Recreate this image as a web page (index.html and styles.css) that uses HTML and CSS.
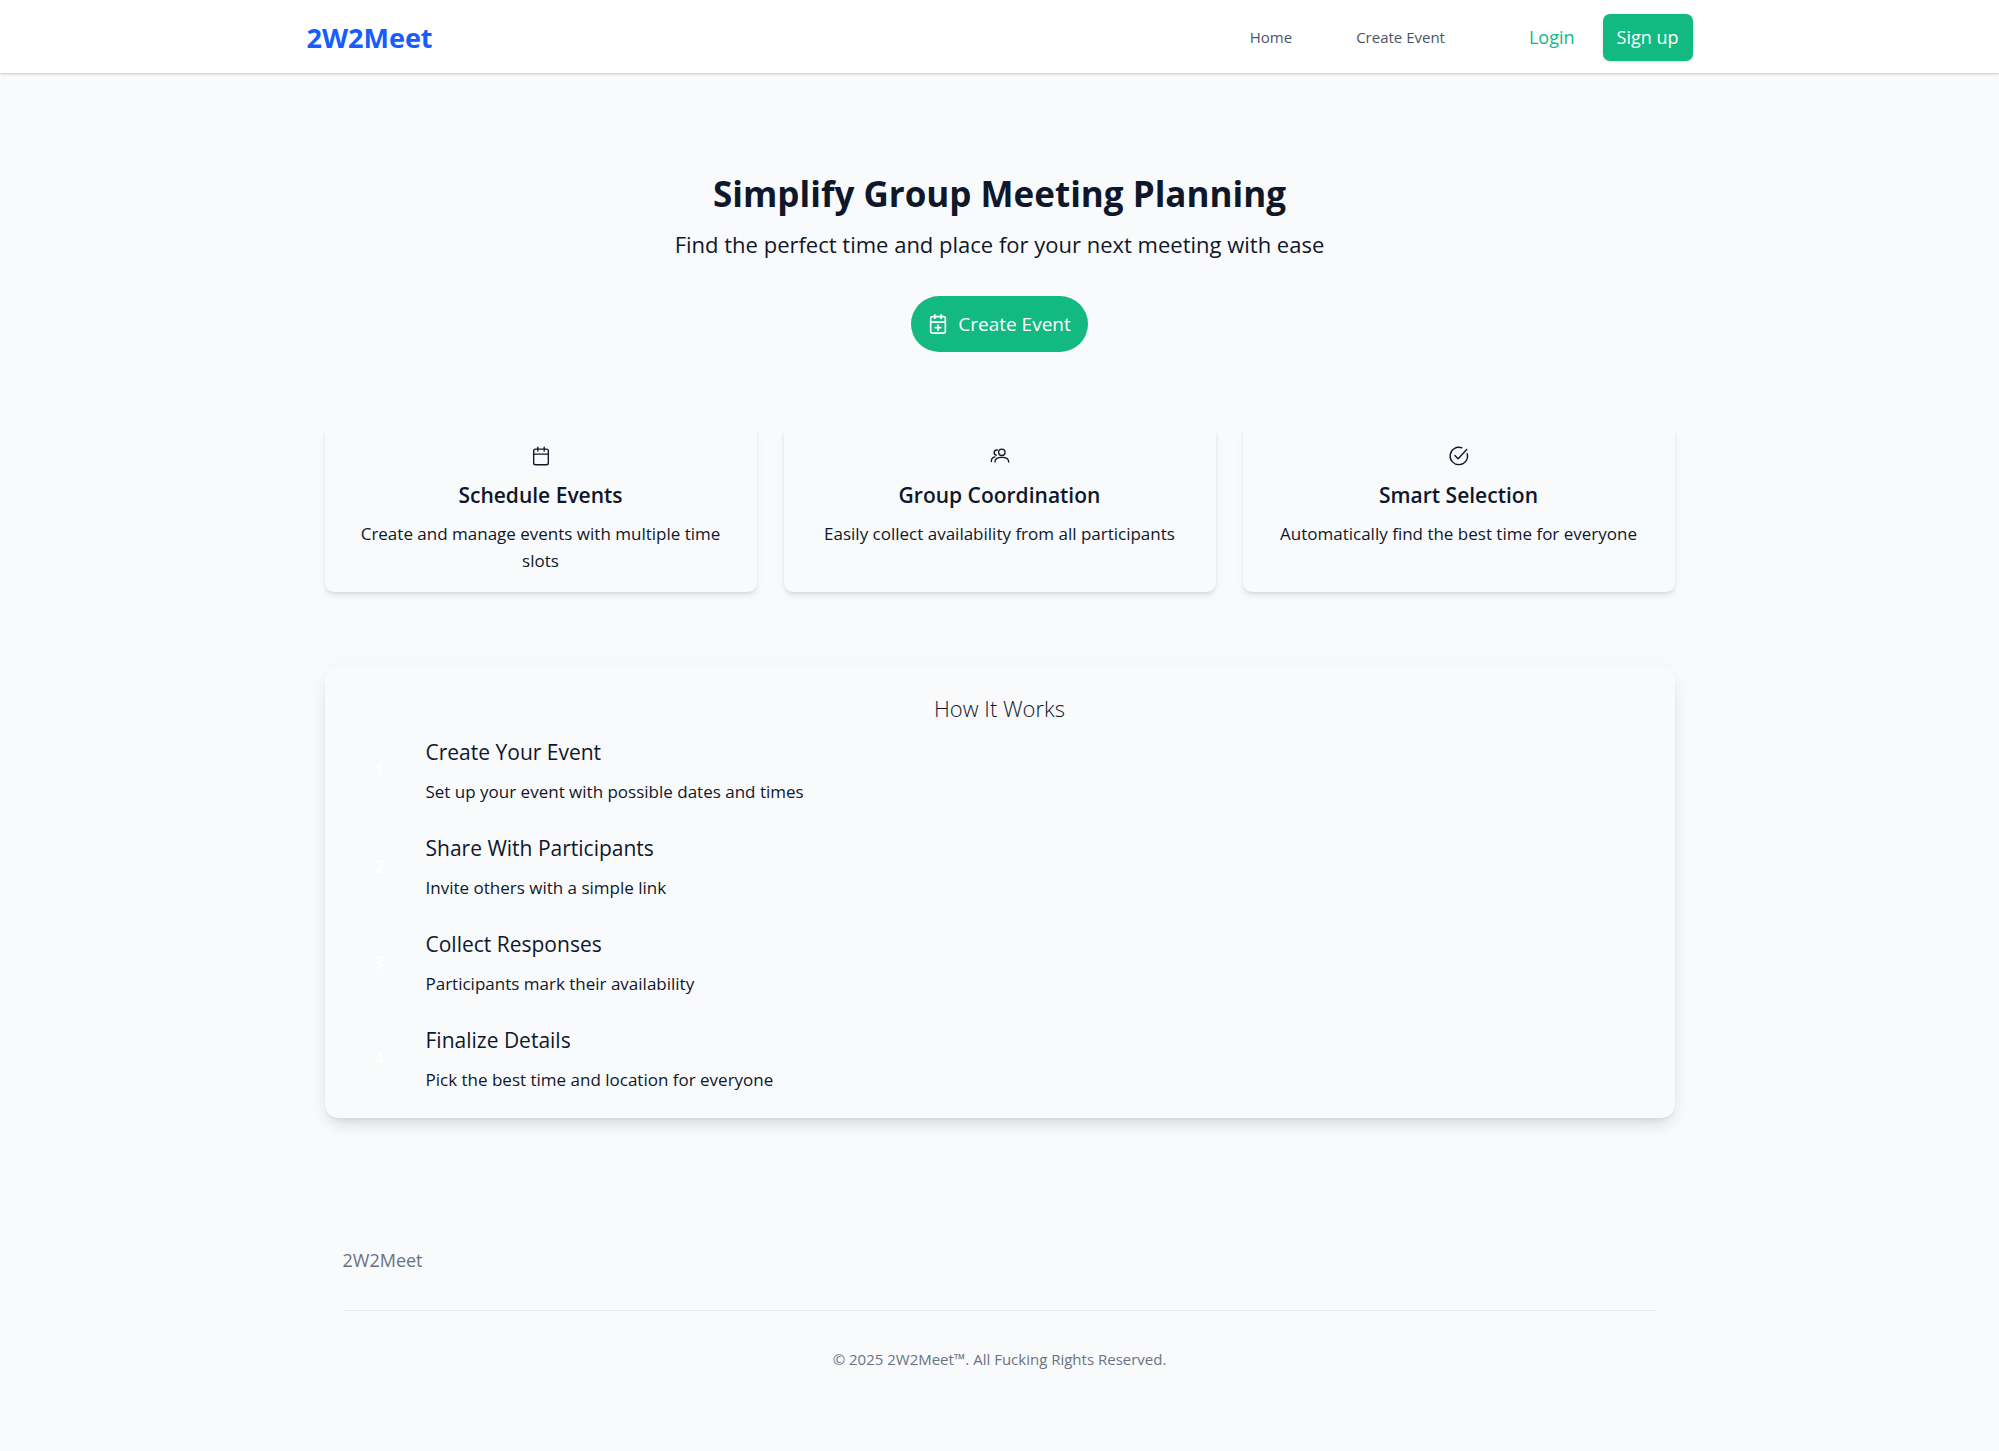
FILE: index.html
```html
<!DOCTYPE html>
<html lang="en">
<head>
<meta charset="utf-8">
<meta name="viewport" content="width=device-width, initial-scale=1">
<title>2W2Meet</title>
<link rel="stylesheet" href="styles.css">
</head>
<body>
<header class="site-header">
  <div class="header-inner">
    <a class="logo" href="#">2W2Meet</a>
    <nav class="nav">
      <a class="nav-link" href="#">Home</a>
      <a class="nav-link" href="#">Create Event</a>
      <div class="auth">
        <a class="login" href="#">Login</a>
        <button class="signup" type="button">Sign up</button>
      </div>
    </nav>
  </div>
</header>
<main class="main">
  <section class="hero">
    <h1 class="hero-title">Simplify Group Meeting Planning</h1>
    <p class="hero-text">Find the perfect time and place for your next meeting with ease</p>
    <button class="create" type="button">
      <svg class="icon icon-bold" viewBox="0 0 24 24" aria-hidden="true"><rect x="4" y="4" width="16" height="18" rx="2"/><path d="M4 10h16M8.500 2v4M15.500 2v4M12 13v6M9 16h6"/></svg>
      Create Event
    </button>
  </section>
  <section class="features">
    <article class="card">
      <svg class="icon" viewBox="0 0 24 24" aria-hidden="true"><rect x="4" y="4.500" width="16" height="17" rx="2"/><path d="M4 10h16M8.500 2.500v4M15.500 2.500v4"/></svg>
      <h2 class="card-title">Schedule Events</h2>
      <p class="card-text">Create and manage events with multiple time slots</p>
    </article>
    <article class="card">
      <svg class="icon" viewBox="0 0 24 24" aria-hidden="true"><circle cx="14" cy="8" r="3.500"/><path d="M6.500 18.500c0-3.500 2-5 7.500-5s7.500 1.500 7.500 5M9 5.500c-4-.5-4.500 5-1 5.500M2.500 18c0-2.500 1-4.500 4-5"/></svg>
      <h2 class="card-title">Group Coordination</h2>
      <p class="card-text">Easily collect availability from all participants</p>
    </article>
    <article class="card">
      <svg class="icon" viewBox="0 0 24 24" aria-hidden="true"><path d="M21 9.500A9.500 9.500 0 1 1 15 3M7.500 11.500l3.500 3.500L20.500 5"/></svg>
      <h2 class="card-title">Smart Selection</h2>
      <p class="card-text">Automatically find the best time for everyone</p>
    </article>
  </section>
  <section class="how">
    <h2 class="how-title">How It Works</h2>
    <ol class="steps">
      <li class="step"><span class="num">1</span><div><h3 class="step-title">Create Your Event</h3><p class="step-text">Set up your event with possible dates and times</p></div></li>
      <li class="step"><span class="num">2</span><div><h3 class="step-title">Share With Participants</h3><p class="step-text">Invite others with a simple link</p></div></li>
      <li class="step"><span class="num">3</span><div><h3 class="step-title">Collect Responses</h3><p class="step-text">Participants mark their availability</p></div></li>
      <li class="step"><span class="num">4</span><div><h3 class="step-title">Finalize Details</h3><p class="step-text">Pick the best time and location for everyone</p></div></li>
    </ol>
  </section>
</main>
<footer class="footer">
  <a class="footer-brand" href="#">2W2Meet</a>
  <p class="copyright">© 2025 2W2Meet™. All Fucking Rights Reserved.</p>
</footer>
</body>
</html>
```
FILE: styles.css
```css
*, *::before, *::after { box-sizing: border-box; }
body {
  margin: 0;
  background: #f9fafc;
  color: #0f172a;
  font-family: "Open Sans", "Noto Sans", sans-serif;
  font-size: 17px;
  line-height: 27px;
}
h1, h2, h3, p, ol { margin: 0; padding: 0; }
a { color: inherit; text-decoration: none; }
button { border: 0; font: inherit; cursor: pointer; }

.icon {
  width: 22px;
  height: 22px;
  fill: none;
  stroke: currentColor;
  stroke-width: 1.5;
  stroke-linecap: round;
  stroke-linejoin: round;
}
.icon-bold { stroke-width: 1.8; }

.site-header { background: #fff; box-shadow: 0 1px 3px rgba(0,0,0,.12), 0 1px 2px rgba(0,0,0,.1); }
.header-inner {
  max-width: 1440px;
  height: 73px;
  margin: 0 auto;
  padding: 2px 27px 0;
  display: flex;
  align-items: center;
  justify-content: space-between;
}
.logo { color: #155dfc; font-size: 27px; font-weight: 700; line-height: 36px; }
.nav { display: flex; align-items: center; gap: 64px; }
.nav-link { color: #4a5565; font-size: 15px; }
.auth { display: flex; align-items: center; gap: 28px; margin-left: 20px; font-size: 18px; }
.login { color: #12b981; }
.signup {
  height: 47px;
  padding: 0 14px;
  border-radius: 7px;
  background: #12b981;
  color: #fff;
  box-shadow: 0 1px 3px rgba(0,0,0,.15);
}

.main { max-width: 1440px; margin: 0 auto; padding: 91px 45px 0; }
.hero { display: flex; flex-direction: column; align-items: center; text-align: center; }
.hero-title { font-size: 35px; line-height: 60px; font-weight: 700; }
.hero-text { font-size: 22px; line-height: 40px; }
.create {
  display: flex;
  align-items: center;
  gap: 9px;
  height: 56px;
  margin-top: 32px;
  padding: 0 17px 0 16px;
  border-radius: 28px;
  background: #12b981;
  color: #fff;
  font-size: 19px;
}

.features { display: grid; grid-template-columns: repeat(3, 1fr); gap: 27px; margin-top: 72px; }
.card {
  display: flex;
  flex-direction: column;
  align-items: center;
  padding: 21px 27px 18px;
  border-radius: 9px;
  text-align: center;
  box-shadow: 0 4px 6px -1px rgba(0,0,0,.1), 0 2px 4px -2px rgba(0,0,0,.1);
  background: #f9fafc;
}
.card-title { margin: 12px 0 9px; font-size: 21px; line-height: 32px; font-weight: 600; }

.how {
  margin-top: 75px;
  padding: 25px 36px;
  border-radius: 14px;
  background: #f9fafc;
  box-shadow: 0 10px 15px -3px rgba(0,0,0,.1), 0 4px 6px -4px rgba(0,0,0,.1), 0 0 20px rgba(0,0,0,.03);
}
.how-title { text-align: center; font-size: 22px; line-height: 32px; font-weight: 300; }
.steps { display: grid; gap: 27px; margin-top: 12px; list-style: none; }
.step { display: flex; align-items: center; gap: 28px; }
.num { width: 37px; color: #fff; font-weight: 700; text-align: center; }
.step-title { margin-bottom: 10px; font-size: 21px; line-height: 32px; font-weight: 400; }

.footer { max-width: 1440px; margin: 0 auto; padding: 129px 63px 75px; color: #6a7282; }
.footer-brand { display: block; font-size: 18px; }
.copyright {
  margin-top: 36px;
  padding-top: 35px;
  border-top: 1px solid #e5e7eb;
  font-size: 15px;
  text-align: center;
}
```
